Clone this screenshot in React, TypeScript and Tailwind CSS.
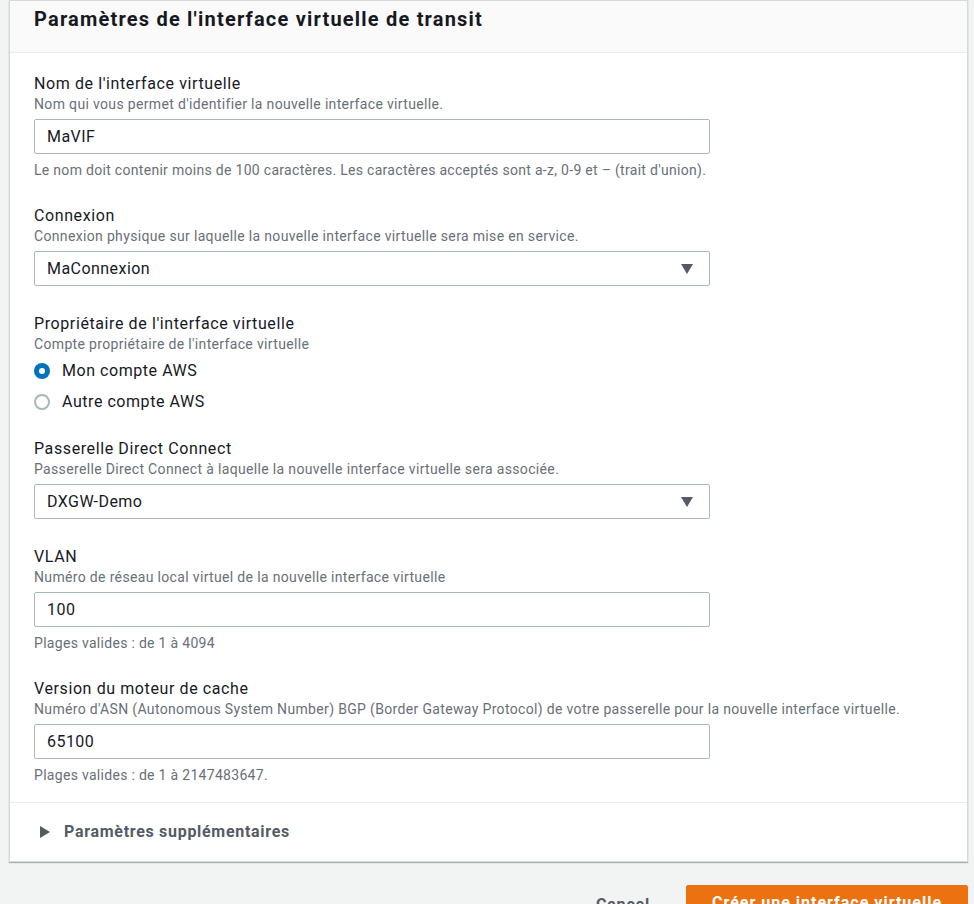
import React from 'react';

const font = { fontFamily: 'Roboto, "Noto Sans", sans-serif' };

function Caret() {
  return (
    <svg width="12" height="10" viewBox="0 0 12 10" className="shrink-0">
      <path d="M0 0 H12 L6 10 Z" fill="#545b64" />
    </svg>
  );
}

function Field({
  label,
  desc,
  hint,
  children,
  className = '',
}: {
  label: string;
  desc: string;
  hint?: string;
  children: React.ReactNode;
  className?: string;
}) {
  return (
    <div className={className}>
      <div className="text-[16px] leading-[21px] tracking-[0.6px] text-[#16191f]">{label}</div>
      <div className="text-[14px] leading-[20px] tracking-[0.34px] text-[#687078]">{desc}</div>
      <div className="mt-[5px]">{children}</div>
      {hint && (
        <div className="mt-[6px] text-[14px] leading-[20px] tracking-[0.3px] text-[#687078]">{hint}</div>
      )}
    </div>
  );
}

function TextBox({ value }: { value: string }) {
  return (
    <div className="w-[676px] h-[35px] border border-[#aab7b8] rounded-[2px] bg-white flex items-center px-[12px] text-[16px] tracking-[0.45px] text-[#16191f]">
      {value}
    </div>
  );
}

function SelectBox({ value }: { value: string }) {
  return (
    <div className="w-[676px] h-[35px] border border-[#aab7b8] rounded-[2px] bg-white flex items-center justify-between pl-[12px] pr-[16px] text-[16px] tracking-[0.45px] text-[#16191f]">
      <span>{value}</span>
      <Caret />
    </div>
  );
}

function Radio({ checked, label }: { checked?: boolean; label: string }) {
  return (
    <div className="h-[31px] flex items-center gap-[12px]">
      {checked ? (
        <span className="w-[16px] h-[16px] rounded-full bg-[#0073bb] flex items-center justify-center">
          <span className="w-[6px] h-[6px] rounded-full bg-white" />
        </span>
      ) : (
        <span className="w-[16px] h-[16px] rounded-full border-2 border-[#aab7b8] bg-white" />
      )}
      <span className="text-[16px] tracking-[0.55px] text-[#16191f]">{label}</span>
    </div>
  );
}

export default function App() {
  return (
    <div className="min-h-screen bg-[#f2f3f3] pl-[9px] pr-[6px]" style={font}>
      <div className="bg-white border border-[#d5dbdb] shadow-[0_1px_1px_0_rgba(0,28,36,0.3)]">
        <div className="h-[52px] bg-[#fafafa] border-b border-[#eaeded] px-[24px] pt-[5px]">
          <h2 className="text-[20px] leading-[26px] font-bold tracking-[1.2px] text-[#16191f]">
            Paramètres de l'interface virtuelle de transit
          </h2>
        </div>

        <div className="px-[24px] pt-[20px] pb-[17px] border-b border-[#eaeded]">
          <Field
            label="Nom de l'interface virtuelle"
            desc="Nom qui vous permet d'identifier la nouvelle interface virtuelle."
            hint="Le nom doit contenir moins de 100 caractères. Les caractères acceptés sont a-z, 0-9 et – (trait d'union)."
          >
            <TextBox value="MaVIF" />
          </Field>

          <Field
            className="mt-[25px]"
            label="Connexion"
            desc="Connexion physique sur laquelle la nouvelle interface virtuelle sera mise en service."
          >
            <SelectBox value="MaConnexion" />
          </Field>

          <div className="mt-[27px]">
            <div className="text-[16px] leading-[21px] tracking-[0.6px] text-[#16191f]">
              Propriétaire de l'interface virtuelle
            </div>
            <div className="text-[14px] leading-[20px] tracking-[0.34px] text-[#687078]">
              Compte propriétaire de l'interface virtuelle
            </div>
            <div className="mt-[1px]">
              <Radio checked label="Mon compte AWS" />
              <Radio label="Autre compte AWS" />
            </div>
          </div>

          <Field
            className="mt-[21px]"
            label="Passerelle Direct Connect"
            desc="Passerelle Direct Connect à laquelle la nouvelle interface virtuelle sera associée."
          >
            <SelectBox value="DXGW-Demo" />
          </Field>

          <Field
            className="mt-[27px]"
            label="VLAN"
            desc="Numéro de réseau local virtuel de la nouvelle interface virtuelle"
            hint="Plages valides : de 1 à 4094"
          >
            <TextBox value="100" />
          </Field>

          <Field
            className="mt-[25px]"
            label="Version du moteur de cache"
            desc="Numéro d'ASN (Autonomous System Number) BGP (Border Gateway Protocol) de votre passerelle pour la nouvelle interface virtuelle."
            hint="Plages valides : de 1 à 2147483647."
          >
            <TextBox value="65100" />
          </Field>
        </div>

        <div className="h-[58px] flex items-center px-[30px] gap-[14px]">
          <svg width="10" height="12" viewBox="0 0 10 12">
            <path d="M0 0 L10 6 L0 12 Z" fill="#545b64" />
          </svg>
          <span className="text-[16px] font-bold tracking-[0.7px] text-[#545b64]">Paramètres supplémentaires</span>
        </div>
      </div>

      <div className="mt-[23px] flex justify-end items-start gap-[36px]">
        <button className="pt-[8px] text-[16px] font-bold tracking-[0.8px] text-[#545b64]">Cancel</button>
        <button className="h-[36px] w-[282px] bg-[#ec7211] rounded-[2px] text-[16px] font-bold tracking-[1px] text-white border border-[#ec7211]">
          Créer une interface virtuelle
        </button>
      </div>
    </div>
  );
}
